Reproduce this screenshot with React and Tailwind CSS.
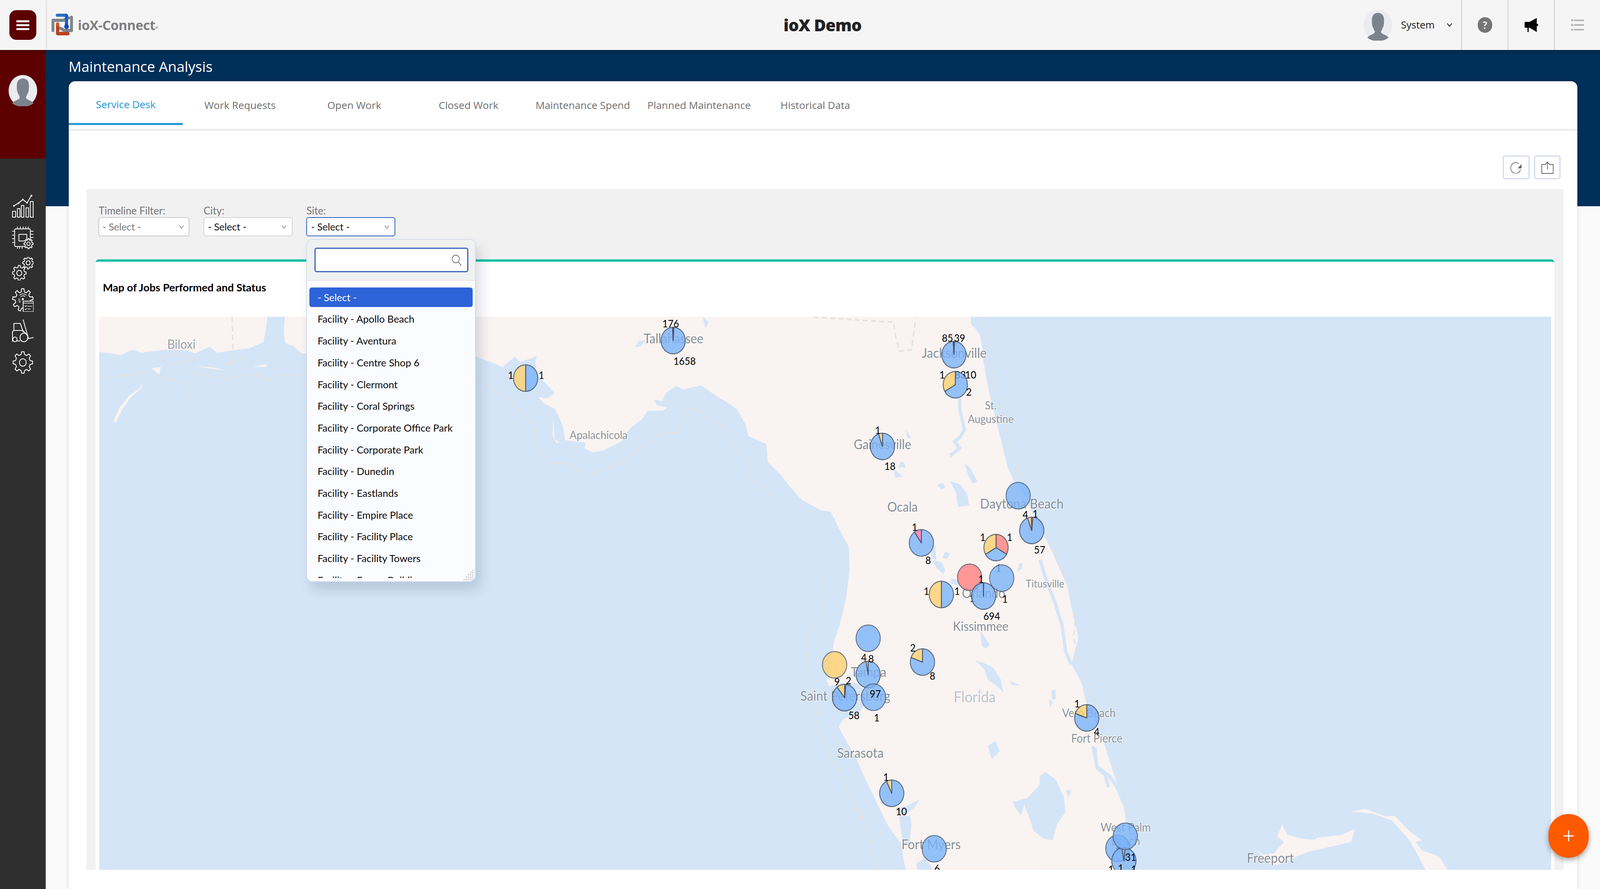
import React from "react";

const conv = (ox, oy, sx, sy, pts) => pts.map(([x, y]) => [ox + x / sx, oy + y / sy]);
const z4 = (p) => conv(240, 480, 1.307, 2.613, p);
const z9 = (p) => conv(1300, 780, 1.206, 3, p);
const z8 = (p) => conv(2500, 780, 2.613, 3, p);
const z6 = (p) => conv(2300, 1200, 1.96, 3, p);
const z7 = (p) => conv(2200, 1600, 1.96, 3, p);
const z10 = (p) => conv(2400, 1900, 1.742, 3, p);
const z11 = (p) => conv(3000, 1700, 1.059, 2.722, p);
const str = (p) => p.map(([x, y]) => `${x.toFixed(1)},${y.toFixed(1)}`).join(" ");

const LAND = "#f9f3f1";
const WATER = "#d4e5f7";

const westLand = [
  [278, 811], [749, 811],
  ...z4([[660, 950], [650, 1035], [600, 1075], [540, 1090], [480, 1105], [455, 1065], [400, 1110], [370, 1090], [290, 1085], [205, 1105], [170, 1085], [130, 1120], [50, 1100]]),
];
const mainLand = [
  [798, 811], [2718, 811],
  ...z8([[572, 150], [610, 190], [640, 240], [655, 330], [660, 420], [700, 650], [770, 950], [840, 1250], [890, 1360]]),
  ...z6([[1090, 150], [1180, 400], [1240, 560], [1350, 900], [1370, 1050], [1410, 1300]]),
  ...z11([[0, 0], [30, 130], [45, 280], [90, 500], [130, 800], [155, 1000], [170, 1200], [190, 1434]]),
  [2538, 2227],
  ...z10([[230, 930], [215, 780], [150, 640], [100, 480], [30, 250], [0, 140]]),
  ...z7([[320, 860], [290, 780], [320, 720], [400, 680], [440, 600], [420, 490], [380, 440], [300, 450], [235, 470], [225, 420], [240, 350], [265, 130]]),
  ...z6([[100, 1200], [135, 1000], [155, 780], [150, 600], [85, 430], [70, 380], [50, 330], [0, 320]]),
  ...z9([[1140, 1500], [1100, 1400], [1070, 1310], [1025, 1210], [1020, 1070], [960, 1010], [950, 920], [920, 800], [880, 740], [850, 700], [800, 620], [740, 650], [715, 625], [680, 680], [670, 740], [640, 730], [650, 770], [685, 790], [670, 815], [620, 815], [600, 880], [560, 950], [530, 1050], [470, 1120], [435, 1135], [405, 1105], [410, 1060], [370, 1050], [340, 1040], [335, 950], [320, 860], [305, 800], [270, 760], [250, 710], [280, 720], [305, 680], [270, 590], [250, 560], [240, 440], [245, 395], [190, 440], [170, 400], [130, 480], [100, 450], [40, 400]]),
  ...z4([[790, 1110], [760, 1060], [730, 1040], [725, 960]]),
];
const islands = [
  z11([[500, 1220], [550, 1300], [590, 1400], [610, 1400], [700, 1310], [830, 1240], [840, 1150], [800, 1190], [730, 1210], [720, 1225], [680, 1215], [640, 1190], [625, 1120], [610, 1200], [630, 1240], [600, 1320], [570, 1330]]),
  z11([[830, 1030], [870, 1010], [930, 1060], [960, 1060], [1000, 1160], [1040, 1230], [1020, 1240], [1040, 1300], [1090, 1340], [1115, 1434], [1050, 1434], [1020, 1300], [1000, 1220], [950, 1090], [890, 1040]]),
  z4([[100, 1568], [125, 1470], [160, 1390], [200, 1340], [215, 1300], [205, 1340], [165, 1405], [135, 1480], [112, 1568]]),
  z4([[400, 1195], [470, 1205], [520, 1225], [450, 1210]]),
  z4([[610, 1200], [665, 1180], [660, 1200]]),
  z4([[240, 1210], [275, 1200], [270, 1250]]),
  z9([[300, 870], [305, 1030], [320, 1060], [310, 1060], [298, 1000]]),
];
const ponds = [
  z10([[920, 230], [970, 290], [1010, 430], [1015, 540], [975, 630], [955, 755], [910, 740], [860, 680], [845, 600], [815, 480], [800, 560], [770, 500], [760, 460], [830, 430], [890, 330], [890, 260]]),
  z10([[1020, 370], [1045, 370], [1030, 430]]),
  z7([[1040, 270], [1100, 300], [1140, 330], [1180, 420], [1195, 520], [1160, 470], [1110, 420], [1090, 340]]),
  z7([[1110, 930], [1150, 890], [1175, 970], [1130, 1030]]),
  z7([[1230, 430], [1290, 465], [1240, 460]]),
  z7([[1060, 490], [1080, 510], [1060, 540]]),
  z7([[1460, 500], [1480, 500], [1480, 570], [1460, 575]]),
  z7([[1445, 570], [1465, 590], [1450, 635]]),
  z7([[1070, 50], [1120, 150], [1100, 180], [1075, 160]]),
  z6([[710, 100], [800, 190], [810, 280], [750, 295], [740, 190]]),
  z6([[640, 120], [665, 115], [680, 140], [660, 160]]),
  z6([[1085, 730], [1105, 720], [1100, 770], [1075, 790]]),
  z6([[715, 840], [760, 860], [750, 900], [705, 880]]),
  z6([[600, 580], [625, 600], [630, 700], [605, 690]]),
  z6([[680, 640], [705, 650], [690, 695], [665, 680]]),
  z6([[610, 700], [660, 720], [680, 780], [670, 810], [630, 760]]),
  z6([[870, 1250], [910, 1330], [925, 1350], [890, 1380]]),
  z8([[50, 1250], [75, 1200], [95, 1250]]),
  z8([[325, 1390], [360, 1370], [385, 1400], [355, 1420]]),
  z8([[525, 1215], [570, 1260], [620, 1360], [580, 1370], [545, 1290]]),
  z8([[425, 1355], [490, 1380], [540, 1450], [520, 1500], [460, 1440]]),
  z9([[805, 96], [825, 130], [815, 185]]),
  z9([[575, 325], [590, 280], [615, 275], [595, 320]]),
  z9([[1490, 960], [1510, 1025], [1497, 1025]]),
  z9([[1475, 1200], [1490, 1250], [1465, 1250]]),
  z9([[1450, 1260], [1480, 1320], [1455, 1330]]),
  z10([[205, 560], [260, 570], [265, 640], [255, 790], [225, 790], [210, 640]]),
  z10([[190, 510], [240, 490], [305, 440], [280, 500], [250, 540], [205, 560]]),
  z10([[290, 930], [330, 890], [360, 950], [365, 980], [290, 980]]),
];
const channels = [
  z8([[490, 720], [490, 800], [525, 960], [490, 1020], [450, 1050], [490, 1100], [420, 1160]]),
  z6([[1200, 700], [1240, 880], [1280, 1020], [1320, 1200], [1340, 1400], [1370, 1500]]),
  z10([[1150, 30], [1170, 190], [1230, 260], [1270, 350], [1300, 470]]),
  z11([[70, 580], [75, 720], [100, 770], [110, 860]]),
];
const dashes = [
  z9([[1180, 96], [1450, 135], [1455, 230], [1470, 358], [1510, 345], [1525, 100]]),
  z9([[40, 580], [130, 700], [230, 900], [250, 1100], [290, 1220], [350, 1220], [420, 1320], [530, 1210], [600, 1090], [660, 995], [720, 980], [750, 810], [785, 795], [840, 900], [880, 940], [910, 1080], [960, 1190], [970, 1330], [1040, 1470], [1040, 1500]]),
  z8([[660, 96], [690, 270], [715, 310], [700, 400], [770, 700], [840, 1000], [930, 1340]]),
  z6([[1080, 0], [1150, 250], [1240, 520], [1380, 900], [1425, 1045], [1395, 1110], [1385, 1300], [1420, 1500]]),
  z11([[30, 0], [80, 350], [130, 700], [180, 1100]]),
  z7([[150, 0], [125, 80], [130, 450], [185, 650], [170, 750], [190, 850], [270, 1050], [420, 1500]]),
  z6([[0, 800], [30, 940], [0, 1100]]),
  z10([[0, 500], [55, 660], [75, 840], [105, 980]]),
  z4([[536, 866], [540, 1150], [505, 1190]]),
  z4([[50, 1275], [140, 1260], [230, 1230], [300, 1280], [360, 1300], [395, 1500], [395, 1568]]),
  z4([[380, 1240], [510, 1280], [620, 1245], [670, 1295], [700, 1255], [810, 1250]]),
  z4([[280, 1130], [340, 1110], [400, 1150], [360, 1170], [290, 1180], [280, 1130]]),
  z4([[50, 1100], [60, 1200], [75, 1270]]),
  z4([[510, 1190], [570, 1130], [575, 1165], [510, 1190]]),
];

const placeLabels = [
  ["Biloxi", 508, 880, 33, "#9aa1a8"],
  ["Tallahassee", 1886, 866, 34, "#868e96"],
  ["Apalachicola", 1676, 1113, 29.5, "#8c9399"],
  ["Gainesville", 2471, 1137, 34, "#868e96"],
  ["Jacksonville", 2672, 902, 35, "#868e96"],
  ["St.", 2774, 1037, 29, "#8c9399"],
  ["Augustine", 2774, 1072, 29, "#8c9399"],
  ["Ocala", 2527, 1297, 34, "#868e96"],
  ["Daytona Beach", 2861, 1288, 35, "#868e96"],
  ["Orlando", 2754, 1518, 34, "#868e96"],
  ["Titusville", 2926, 1494, 27.5, "#8c9399"],
  ["Kissimmee", 2746, 1602, 33, "#868e96"],
  ["Tampa", 2432, 1719, 35, "#868e96"],
  ["Saint Petersburg", 2367, 1780, 35, "#868e96"],
  ["Florida", 2729, 1783, 39, "#bcc3cb"],
  ["Sarasota", 2409, 1926, 35, "#868e96"],
  ["Fort Myers", 2607, 2160, 34.5, "#868e96"],
  ["West Palm", 3152, 2118, 30, "#8c9399"],
  ["Beach", 3152, 2153, 30, "#8c9399"],
  ["Vero Beach", 3049, 1825, 30, "#8c9399"],
  ["Fort Pierce", 3071, 1890, 30, "#8c9399"],
  ["Freeport", 3557, 2195, 35, "#868e96"],
];

const B = "#7bb3fa", Y = "#fdd070", R = "#ff8080", P = "#f675af", K = "#4a4a4a";
const pies = [
  { c: [1472, 968], s: [[0, 180, B], [180, 360, Y]], l: [["1", 1430, 960], ["1", 1516, 960]] },
  { c: [1885, 872], s: [[3, 357, B], [357, 363, K]], l: [["176", 1878, 828], ["1658", 1917, 924]] },
  { c: [2471, 1143], s: [[0, 341, B], [341, 360, Y]], l: [["1", 2458, 1101], ["18", 2492, 1193]] },
  { c: [2671, 908], s: [[3, 357, B], [357, 363, K]], l: [["85", 2653, 865], ["39", 2687, 865]] },
  { c: [2675, 985], s: [[0, 240, B], [240, 360, Y]], l: [["1", 2638, 959], ["10", 2718, 959], ["2", 2713, 1003]] },
  { c: [2851, 1269], s: [[0, 360, B]], l: [] },
  { c: [2889, 1358], s: [[5, 340, B], [340, 358, Y], [358, 365, R]], l: [["4", 2871, 1317], ["1", 2899, 1315], ["57", 2911, 1407]] },
  { c: [2580, 1390], s: [[0, 325, B], [325, 360, P]], l: [["1", 2561, 1349], ["8", 2599, 1434]] },
  { c: [2789, 1402], s: [[0, 120, R], [120, 240, B], [240, 360, Y]], l: [["1", 2752, 1375], ["1", 2827, 1375]] },
  { c: [2715, 1478], s: [[0, 360, R]], l: [] },
  { c: [2805, 1480], s: [[0, 360, B]], l: [] },
  { c: [2636, 1522], s: [[0, 180, B], [180, 360, Y]], l: [["1", 2594, 1513], ["1", 2680, 1513]] },
  { c: [2754, 1526], s: [[0, 359, B], [359, 360.5, B]], l: [["1", 2747, 1482], ["694", 2777, 1577], ["1", 2814, 1533]] },
  { c: [2431, 1634], s: [[0, 360, B]], l: [] },
  { c: [2337, 1702], s: [[0, 360, Y]], l: [] },
  { c: [2431, 1727], s: [[0, 350, B], [350, 360, Y]], l: [["4", 2419, 1683], ["8", 2439, 1686]] },
  { c: [2365, 1786], s: [[6, 322, B], [322, 360, Y], [360, 366, R]], l: [["9", 2344, 1745], ["2", 2376, 1742], ["58", 2391, 1831]] },
  { c: [2446, 1785], s: [[0, 360, B]], l: [["97", 2451, 1776], ["1", 2455, 1837]] },
  { c: [2583, 1695], s: [[0, 290, B], [290, 360, Y]], l: [["2", 2556, 1658], ["8", 2611, 1730]] },
  { c: [2497, 2031], s: [[0, 335, B], [335, 360, Y]], l: [["1", 2481, 1989], ["10", 2524, 2077]] },
  { c: [2616, 2173], s: [[0, 360, B]], l: [["6", 2624, 2223]] },
  { c: [3043, 1838], s: [[0, 290, B], [290, 360, Y]], l: [["1", 3016, 1801], ["4", 3071, 1873]] },
  { c: [3130, 2172], s: [[0, 360, B]], l: [] },
  { c: [3147, 2204], s: [[6, 350, B], [350, 366, "#b5bac0"]], l: [["31", 3166, 2194], ["1", 3111, 2225], ["1", 3138, 2222], ["1", 3175, 2225]] },
  { c: [3151, 2141], s: [[0, 360, B]], l: [] },
];
const underLabels = [["83", 2689, 959], ["1", 2796, 1454], ["2", 3132, 2163], ["1", 3159, 2163], ["1", 2722, 1531]];

const R0 = 34;
const pt = (c, a) => [c[0] + R0 * Math.sin((a * Math.PI) / 180), c[1] - R0 * Math.cos((a * Math.PI) / 180)];
function Pie({ c, s }) {
  if (s.length === 1) return <circle cx={c[0]} cy={c[1]} r={R0} fill={s[0][2]} fillOpacity="0.8" stroke="#4b5d73" strokeWidth="2.5" strokeOpacity="0.8" />;
  return s.map(([a, b, f], i) => {
    const [x1, y1] = pt(c, a);
    const [x2, y2] = pt(c, b);
    return <path key={i} d={`M${c[0]} ${c[1]}L${x1} ${y1}A${R0} ${R0} 0 ${b - a > 180 ? 1 : 0} 1 ${x2} ${y2}Z`} fill={f} fillOpacity="0.8" stroke="#3f4f63" strokeWidth="2.5" strokeOpacity="0.8" strokeLinejoin="round" />;
  });
}

function MapView() {
  return (
    <svg className="block w-full h-full" viewBox="278 811 4065 1416" preserveAspectRatio="none">
      <rect x="278" y="811" width="4065" height="1416" fill={WATER} />
      <polygon points={str(westLand)} fill={LAND} />
      <polygon points={str(mainLand)} fill={LAND} />
      {islands.map((p, i) => <polygon key={i} points={str(p)} fill={LAND} />)}
      {ponds.map((p, i) => <polygon key={i} points={str(p)} fill={WATER} />)}
      {channels.map((p, i) => <polyline key={i} points={str(p)} fill="none" stroke={WATER} strokeWidth="9" strokeLinejoin="round" />)}
      {dashes.map((p, i) => <polyline key={i} points={str(p)} fill="none" stroke="#e2e0df" strokeWidth="3.5" strokeDasharray="14 9" />)}
      {placeLabels.map(([t, x, y, s, col]) => (
        <text key={t + x} x={x} y={y} fontSize={s} fill={col} textAnchor="middle" dominantBaseline="central" stroke="#ffffff" strokeWidth="3" strokeOpacity="0.7" paintOrder="stroke">{t}</text>
      ))}
      {underLabels.map(([t, x, y]) => <text key={t + x} x={x} y={y} fontSize="27" fill="#000" textAnchor="middle" dominantBaseline="central">{t}</text>)}
      {pies.map((p, i) => <Pie key={i} c={p.c} s={p.s} />)}
      {pies.flatMap((p, i) => p.l.map(([t, x, y], j) => <text key={`${i}-${j}`} x={x} y={y} fontSize="27" fill="#000" textAnchor="middle" dominantBaseline="central">{t}</text>))}
    </svg>
  );
}

const gearPath = (cx, cy, ro, ri, n) => {
  let d = "";
  const step = (Math.PI * 2) / n;
  for (let i = 0; i < n; i++) {
    const a = i * step - Math.PI / 2;
    const P = (r, t) => `${(cx + r * Math.cos(t)).toFixed(2)} ${(cy + r * Math.sin(t)).toFixed(2)}`;
    d += `${i === 0 ? "M" : "L"}${P(ri, a - step * 0.3)}L${P(ro, a - step * 0.16)}L${P(ro, a + step * 0.16)}L${P(ri, a + step * 0.3)}`;
    d += `L${P(ri * 0.98, a + step * 0.5)}`;
  }
  return d + "Z";
};

const ic = { fill: "none", stroke: "#ffffff", strokeWidth: 2.2, strokeLinejoin: "round", strokeLinecap: "round" };
const DARK = "#2f2f2f";

function NavIcon({ box, children }) {
  return (
    <svg className="w-[1.339vw] h-[60px]" viewBox={box} preserveAspectRatio="none" {...ic}>{children}</svg>
  );
}
const ChartIcon = () => (
  <NavIcon box="32 498 60 60">
    <rect x="33" y="541" width="9" height="15" /><rect x="47" y="534" width="7" height="22" /><rect x="58" y="526" width="7" height="30" /><rect x="71" y="532" width="7" height="24" /><rect x="83" y="516" width="8" height="40" />
    <polyline points="37,527 50,520 62,511 74,519 86,501" />
    <circle cx="37" cy="527" r="1.2" /><circle cx="50" cy="520" r="1.2" /><circle cx="62" cy="511" r="1.2" /><circle cx="74" cy="519" r="1.2" /><circle cx="86" cy="501" r="1.5" fill="#fff" />
  </NavIcon>
);
const ChipIcon = () => (
  <NavIcon box="32 577 60 60">
    <rect x="39" y="585" width="44" height="45" rx="3" />
    <path d="M73 612V599H51V616H66" />
    <path d="M47 580v3M55 580v3M63 580v3M70 580v3M77 580v3M33 591h4M33 601h4M33 610h4M33 620h4M85 591h6M85 599h6M85 607h6M47 632v3M53 632v3M60 632v3" />
    <path d={gearPath(78, 623, 13, 10, 8)} fill={DARK} />
    <circle cx="78" cy="623" r="4.5" />
  </NavIcon>
);
const GearsIcon = () => (
  <NavIcon box="32 657 60 60">
    <path d={gearPath(52, 698, 19.5, 15, 8)} fill={DARK} />
    <circle cx="52" cy="698" r="7" />
    <path d={gearPath(77, 672, 15.5, 12, 8)} fill={DARK} />
    <circle cx="77" cy="672" r="5.5" />
  </NavIcon>
);
const ProcessIcon = () => (
  <NavIcon box="32 737 60 60">
    <path d={gearPath(62, 767, 29, 21, 9)} />
    <circle cx="62" cy="765" r="1.8" fill="#fff" />
    <path d="M56 759a9 9 0 0 1 12 -1M53 755a14 14 0 0 1 19 0" strokeWidth="1.6" />
    <path d="M50 765h4M50 769h4M52 773l3-2" strokeWidth="1.6" />
    <rect x="63" y="770" width="29" height="27" rx="2" fill={DARK} />
    <path d="M63 775h29M68 782l2 2 3-3M68 790l2 2 3-3M76 783h11M76 790h7" strokeWidth="1.6" />
  </NavIcon>
);
const ForkIcon = () => (
  <NavIcon box="32 819 60 60">
    <path d="M37 847V829H55L63 851M33 875V853Q33 847 39 847H62L75 859" />
    <path d="M46 874H54" />
    <circle cx="40" cy="870" r="6" /><circle cx="65" cy="865" r="11" />
    <path d="M63 820L78 868L92 865" />
  </NavIcon>
);
const GearIcon = () => (
  <NavIcon box="32 897 60 60">
    <path d={gearPath(62, 927, 27.5, 21, 8)} />
    <circle cx="62" cy="927" r="9.5" />
  </NavIcon>
);

const Avatar = () => (
  <svg className="w-[1.786vw] h-[80px] shrink-0" viewBox="0 0 80 80" preserveAspectRatio="none">
    <circle cx="40" cy="40" r="40" fill="#ebecf0" />
    <path d="M40 9c-10 0-17 6-17 18 0 6 0 10 1 13 0 3 1 5 3 7 1 4 2 6 4 8v4c-1 3-10 6-16 9l-5 4A40 40 0 0 0 40 80a40 40 0 0 0 30-8l-5-4c-6-3-15-6-16-9v-4c2-2 3-4 4-8 2-2 3-4 3-7 1-3 1-7 1-13 0-12-7-18-17-18z" fill="#7b838c" />
  </svg>
);

const Logo = () => (
  <svg className="w-[1.406vw] h-[62px] shrink-0" viewBox="143 33 63 62" preserveAspectRatio="none" fill="none" strokeLinecap="round" strokeLinejoin="round">
    <path d="M149 52H176C182 52 186 46 192 46M148 52V78M200 44V78H182C176 78 172 72 166 72" stroke="#7f8488" strokeWidth="8" />
    <path d="M161 62V86H190" stroke="#b8431c" strokeWidth="9" />
    <circle cx="161" cy="62" r="5" fill="#cf5a20" />
    <path d="M160 39H184" stroke="#2a73c9" strokeWidth="8" />
    <path d="M186 40V68" stroke="#1c5ec4" strokeWidth="9" />
    <circle cx="186" cy="68" r="6.5" fill="#0c4bb3" />
  </svg>
);

const Chevron = () => (
  <svg className="w-[0.3125vw] h-[10px] shrink-0" viewBox="0 0 14 10" preserveAspectRatio="none" fill="none" stroke="#777" strokeWidth="1.6"><path d="M1.5 1.5L7 8.5L12.5 1.5" /></svg>
);

function FilterSelect({ label, w, pl, textClass, borderClass, children }) {
  return (
    <div className="relative">
      <div className="h-[34px] text-[0.638vw] leading-[34px] text-[#777]">{label}</div>
      <div className={`flex items-center justify-between h-[49px] bg-white rounded-[6px] border-2 pr-[0.3125vw] ${w} ${pl} ${borderClass}`}>
        <span className={`text-[0.614vw] ${textClass}`}>- Select -</span>
        <Chevron />
      </div>
      {children}
    </div>
  );
}

const items = ["Facility - Apollo Beach", "Facility - Aventura", "Facility - Centre Shop 6", "Facility - Clermont", "Facility - Coral Springs", "Facility - Corporate Office Park", "Facility - Corporate Park", "Facility - Dunedin", "Facility - Eastlands", "Facility - Empire Place", "Facility - Facility Place", "Facility - Facility Towers", "Facility - Forum Building"];

function Dropdown() {
  return (
    <div className="absolute left-0 top-[90px] z-20 w-[10.58vw] h-[878px] rounded-[16px] border-2 border-[#d6dcea] bg-[#fbfcff] shadow-[12px_20px_30px_rgba(30,50,80,0.16)] overflow-hidden flex flex-col">
      <div className="shrink-0 h-[105px] bg-[#f1f1f1] border-b-2 border-[#e6e6e6] pt-[20px] pl-[0.446vw]">
        <div className="flex items-center justify-end w-[9.62vw] h-[63px] bg-white rounded-[6px] border-[3px] border-[#3a66bc] pr-[0.3125vw]">
          <svg className="w-[0.67vw] h-[30px]" viewBox="0 0 30 30" preserveAspectRatio="none" fill="none" stroke="#777" strokeWidth="2"><circle cx="13" cy="12" r="10" /><path d="M20 20L28 29" /></svg>
        </div>
      </div>
      <div className="h-[761px] overflow-hidden pt-[17px] px-[0.134vw] flex flex-col gap-[5.7px] text-[0.625vw] text-[#0a0a0a]">
        <div className="shrink-0 flex items-center h-[50px] rounded-[6px] bg-[#2d63d8] text-white pl-[0.513vw]">- Select -</div>
        {items.map((t) => <div key={t} className="shrink-0 flex items-center h-[50px] pl-[0.513vw]">{t}</div>)}
      </div>
      <svg className="absolute right-[2px] bottom-[2px] w-[0.714vw] h-[32px]" viewBox="0 0 32 32" preserveAspectRatio="none" fill="#c4c6c9">
        {[[26, 4], [20, 10], [26, 10], [14, 16], [20, 16], [26, 16], [8, 22], [14, 22], [20, 22], [26, 22], [2, 28], [8, 28], [14, 28], [20, 28], [26, 28]].map(([x, y]) => <rect key={`${x}-${y}`} x={x} y={y} width="3.4" height="3.4" transform={`rotate(45 ${x + 1.7} ${y + 1.7})`} />)}
      </svg>
    </div>
  );
}

const tabs = [["Service Desk", "w-[7.143vw]"], ["Work Requests", "w-[7.143vw]"], ["Open Work", "w-[7.143vw]"], ["Closed Work", "w-[7.143vw]"], ["Maintenance Spend", "w-[7.143vw]"], ["Planned Maintenance", "w-[7.388vw]"], ["Historical Data", "w-[7.143vw]"]];

const muli = "[font-family:'Open_Sans',sans-serif]";

export default function App() {
  return (
    <div className="relative flex flex-col h-[2276px] w-full overflow-hidden bg-[#fafafa] [font-family:Lato,sans-serif]">
      <header className="relative z-10 flex items-center h-[128px] shrink-0 bg-[#f5f5f5] shadow-[0_3px_8px_rgba(0,0,0,0.3)]">
        <div className="flex items-center justify-center w-[2.857vw] h-full shadow-[2px_0_4px_rgba(0,0,0,0.12)]">
          <button className="flex flex-col items-center justify-center gap-[5px] w-[1.696vw] h-[76px] rounded-[18px] bg-[#5c0000]">
            <span className="w-[0.804vw] h-[5px] bg-white" /><span className="w-[0.804vw] h-[5px] bg-white" /><span className="w-[0.804vw] h-[5px] bg-white" />
          </button>
        </div>
        <div className="flex items-center pl-[0.335vw] w-[45.536vw]">
          <Logo />
          <span className={`ml-[0.268vw] text-[0.826vw] font-bold text-[#7f7f7f] tracking-[-0.5px] ${muli}`}>ioX-Connect</span>
          <span className="text-[0.223vw] text-[#7f7f7f] mt-[14px]">®</span>
        </div>
        <div className={`text-[1.027vw] font-extrabold text-[#222] ${muli} w-[6.027vw] text-center tracking-[-1px]`}>ioX Demo</div>
        <div className="flex-1 flex justify-end items-center h-full">
          <Avatar />
          <span className={`ml-[0.536vw] text-[0.625vw] text-[#222] ${muli}`}>System</span>
          <svg className="ml-[0.759vw] mr-[0.558vw] w-[0.335vw] h-[10px]" viewBox="0 0 15 10" preserveAspectRatio="none" fill="none" stroke="#222" strokeWidth="2.2"><path d="M1 1L7.5 8.5L14 1" /></svg>
          <div className="flex items-center justify-center w-[2.902vw] h-full border-l-[3px] border-[#d8d8d8]">
            <span className="flex items-center justify-center w-[0.893vw] h-[40px] rounded-full bg-[#757575] text-white text-[0.67vw] font-bold">?</span>
          </div>
          <div className="flex items-center justify-center w-[2.902vw] h-full border-l-[3px] border-[#d8d8d8]">
            <svg className="w-[0.848vw] h-[36px]" viewBox="0 0 38 36" preserveAspectRatio="none" fill="#000"><rect x="0" y="10" width="15" height="15" rx="2" /><polygon points="14,10 34,0 34,36 14,25" /><rect x="8" y="25" width="3.5" height="11" /><circle cx="35" cy="18" r="3" /></svg>
          </div>
          <div className="flex items-center justify-center w-[2.879vw] h-full border-l-[3px] border-[#d8d8d8]">
            <svg className="w-[0.804vw] h-[30px]" viewBox="0 0 36 30" preserveAspectRatio="none" fill="#b5b5b5"><circle cx="3" cy="3" r="3" /><circle cx="3" cy="15" r="3" /><circle cx="3" cy="27" r="3" /><rect x="8" y="1" width="28" height="4" /><rect x="8" y="13" width="28" height="4" /><rect x="8" y="25" width="28" height="4" /></svg>
          </div>
        </div>
      </header>
      <div className="flex flex-1 min-h-0">
        <aside className="flex flex-col w-[2.857vw] shrink-0 bg-[#2f2f2f]">
          <div className="flex justify-center h-[278px] pt-[64px] bg-[#5c0000]"><Avatar /></div>
          <nav className="flex flex-col items-center gap-[20px] pt-[92px]">
            <ChartIcon /><ChipIcon /><GearsIcon /><ProcessIcon /><ForkIcon /><GearIcon />
          </nav>
        </aside>
        <main className="flex-1 min-w-0 flex flex-col px-[1.4286vw] bg-[linear-gradient(#002f5a_400px,#fafafa_400px)]">
          <h1 className={`shrink-0 h-[80px] pt-[18px] text-[0.893vw] leading-[48px] text-white ${muli}`}>Maintenance Analysis</h1>
          <section className="flex-1 min-h-0 flex flex-col bg-white rounded-t-[16px] shadow-[0_0_8px_rgba(0,0,0,0.16)] pb-[49px]">
            <div className={`shrink-0 flex h-[126px] border-b-[3px] border-[#e4e4e4] text-[0.638vw] ${muli}`}>
              {tabs.map(([t, w], i) => (
                <div key={t} className={`flex items-center justify-center h-[112px] pt-[12px] ${w} ${i === 0 ? "text-[#2397d4] border-b-[5px] border-[#2397d4]" : "text-[#6f6f6f]"}`}>{t}</div>
              ))}
            </div>
            <div className="shrink-0 flex justify-end gap-[0.268vw] pt-[64px] pb-[25px] pr-[1.027vw]">
              <button className="flex items-center justify-center w-[1.674vw] h-[61px] rounded-[6px] border-[3px] border-[#d2d9e8] bg-white">
                <svg className="w-[0.759vw] h-[30px]" viewBox="0 0 34 30" preserveAspectRatio="none" fill="none" stroke="#666" strokeWidth="1.8"><path d="M29 20A14 14 0 1 1 24 5" /><polygon points="32,6 32,17 21,17" fill="#666" stroke="none" /></svg>
              </button>
              <button className="flex items-center justify-center w-[1.674vw] h-[61px] rounded-[6px] border-[3px] border-[#d2d9e8] bg-white">
                <svg className="w-[0.759vw] h-[32px]" viewBox="0 0 34 32" preserveAspectRatio="none" fill="none" stroke="#666" strokeWidth="2"><path d="M10 8H1V31H33V8H24" /><path d="M17 21V2M10 9L17 2L24 9" /></svg>
              </button>
            </div>
            <div className="relative flex-1 min-h-0 flex flex-col ml-[1.116vw] mr-[0.848vw] bg-[#f1f1f1]">
              <div className="shrink-0 flex h-[180px] pt-[38px] pl-[0.759vw] gap-[0.871vw]">
                <FilterSelect label="Timeline Filter:" w="w-[5.692vw]" pl="pl-[0.2vw]" textClass="text-[#777]" borderClass="border-[#c8cad0]" />
                <FilterSelect label="City:" w="w-[5.558vw]" pl="pl-[0.223vw]" textClass="text-[#111]" borderClass="border-[#d4d4d4]" />
                <FilterSelect label="Site:" w="w-[5.558vw]" pl="pl-[0.246vw]" textClass="text-[#111]" borderClass="border-[#2e62c9]">
                  <Dropdown />
                </FilterSelect>
              </div>
              <div className="flex-1 min-h-0 flex flex-col mx-[0.58vw] bg-white rounded-t-[8px] border-t-[6px] border-[#14c0a4]">
                <div className="shrink-0 flex items-center h-[141px] pb-[10px] pl-[0.446vw] text-[0.67vw] font-bold text-black">Map of Jobs Performed and Status</div>
                <div className="flex-1 min-h-0 ml-[0.223vw] mr-[0.201vw]"><MapView /></div>
              </div>
            </div>
          </section>
        </main>
      </div>
      <button className="absolute z-30 right-[0.714vw] bottom-[80px] flex items-center justify-center w-[2.5vw] h-[112px] rounded-full bg-[#ff5a00] shadow-[0_6px_14px_rgba(0,0,0,0.35)]">
        <svg className="w-[0.67vw] h-[30px]" viewBox="0 0 30 30" preserveAspectRatio="none" stroke="#fff" strokeWidth="3"><path d="M15 1V29M1 15H29" /></svg>
      </button>
    </div>
  );
}
